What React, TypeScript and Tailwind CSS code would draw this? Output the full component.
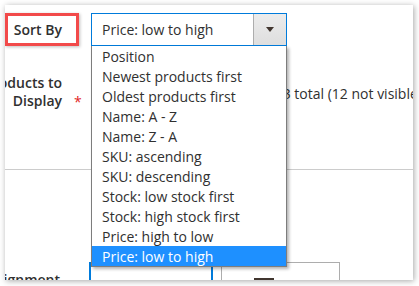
const sortOptions = [
  "Position",
  "Newest products first",
  "Oldest products first",
  "Name: A - Z",
  "Name: Z - A",
  "SKU: ascending",
  "SKU: descending",
  "Stock: low stock first",
  "Stock: high stock first",
  "Price: high to low",
  "Price: low to high",
];

const selected = "Price: low to high";

function SortSelect() {
  return (
    <div className="relative w-[196px] h-[33px]">
      <div className="flex h-full border border-[#007bdb] bg-white">
        <div className="flex-1 flex items-center pl-[10px] text-[14px] text-[#303030]">{selected}</div>
        <div className="w-[33px] flex items-center justify-center border-l border-[#adadad] bg-gradient-to-b from-[#ececec] to-[#dedede]">
          <div className="w-0 h-0 border-l-[4px] border-r-[4px] border-t-[5px] border-l-transparent border-r-transparent border-t-[#41362f]" />
        </div>
      </div>
      <ul className="absolute left-0 top-[33px] w-[196px] bg-white border-x border-b border-[#7d7d7d] shadow-[2px_2px_3px_rgba(0,0,0,0.3)] z-10">
        {sortOptions.map((opt) => (
          <li
            key={opt}
            className={
              opt === selected
                ? "h-[20px] flex items-center pl-[10px] text-[14px] bg-[#1e90ff] text-white"
                : "h-[20px] flex items-center pl-[10px] text-[14px] text-[#303030]"
            }
          >
            {opt}
          </li>
        ))}
      </ul>
    </div>
  );
}

export default function App() {
  return (
    <div className="w-[419px] h-[286px] bg-white overflow-hidden font-['Open_Sans',sans-serif]">
      <div className="ml-[5px] mt-[5px] w-[408px] h-[275px] bg-white shadow-[1px_1px_6px_rgba(0,0,0,0.35)] overflow-hidden relative">
        <div className="pt-[8px] flex items-start">
          <div className="w-[86px] shrink-0">
            <div className="w-[74px] h-[33px] border-[3px] border-[#f24a4a] flex items-center justify-end pr-[14px] text-[14px] font-semibold text-[#303030] shadow-[1px_1px_3px_rgba(0,0,0,0.25)]">
              Sort By
            </div>
          </div>
          <SortSelect />
        </div>

        <div className="mt-[28px] flex items-start h-[36px]">
          <div className="w-[57px] shrink-0 flex flex-col items-end text-[14px] leading-[18px] font-semibold text-[#303030]">
            <span className="whitespace-nowrap">Products to</span>
            <span className="whitespace-nowrap">Display</span>
          </div>
          <span className="ml-[12px] mt-[19px] text-[14px] leading-[18px] text-[#e22626]">*</span>
          <div className="ml-[193px] mt-[11px] text-[14px] leading-[18px] text-[#303030] whitespace-nowrap">
            13 total (12 not visible)
          </div>
        </div>

        <div className="mt-[59px] border-t border-[#cccccc]">
          <div className="flex items-start pt-[92px]">
            <div className="w-[55px] shrink-0 flex flex-col items-end pt-[9px] text-[14px] leading-[18px] font-semibold text-[#303030]">
              <span className="whitespace-nowrap">Alignment</span>
            </div>
            <div className="ml-[29px] w-[124px] h-[40px] border-2 border-[#007bdb] flex justify-center pt-[13px] text-[14px] leading-[18px] text-[#303030]">
              Default
            </div>
            <div className="ml-[8px] w-[119px] h-[40px] border border-[#adadad] flex items-start pt-[14px] pl-[32px] gap-[10px] text-[14px] leading-[18px] text-[#303030]">
              <span className="mt-px w-[20px] h-[3px] bg-[#41362f]" />
              <span>Left</span>
            </div>
          </div>
        </div>
      </div>
    </div>
  );
}
